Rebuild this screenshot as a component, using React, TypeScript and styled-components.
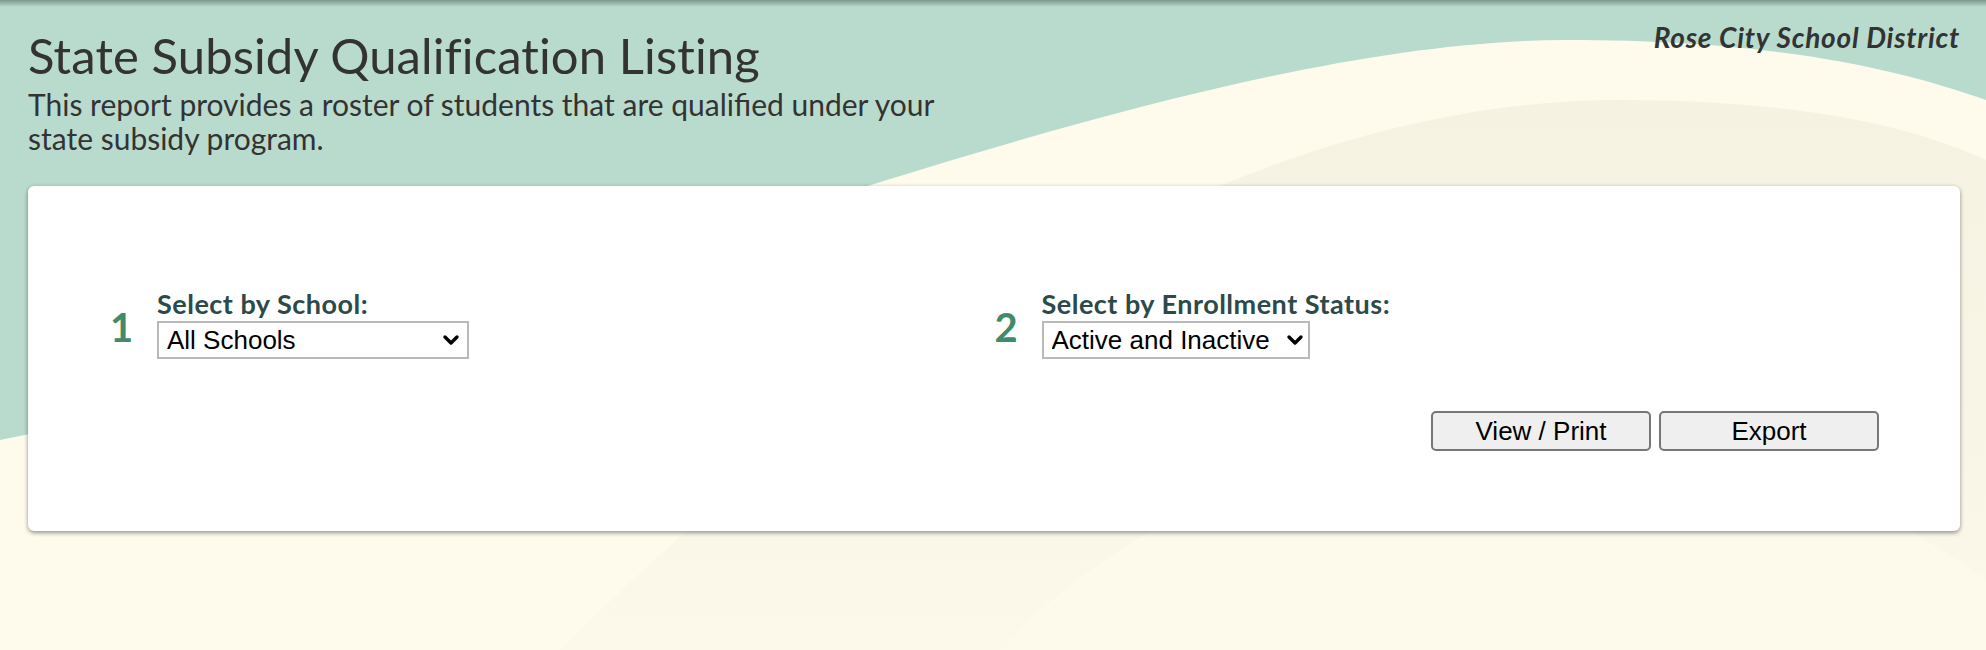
import React from "react";
import styled, { createGlobalStyle } from "styled-components";
import { ChevronDown } from "lucide-react";

const GlobalStyle = createGlobalStyle`
  html, body { margin: 0; padding: 0; }
  body {
    font-family: Lato, "Liberation Sans", sans-serif;
    background: #fffbec;
  }
  * { box-sizing: border-box; }
`;

const Page = styled.div`
  position: relative;
  min-height: 650px;
  overflow: hidden;
  background: #b9dbce;
  padding: 0 26px 0 28px;

  &::after {
    content: "";
    position: absolute;
    top: 0;
    left: 0;
    right: 0;
    height: 7px;
    background: linear-gradient(rgba(50, 70, 62, 0.45), rgba(50, 70, 62, 0));
    pointer-events: none;
    z-index: 2;
  }
`;

const Backdrop = styled.svg`
  position: absolute;
  inset: 0;
  width: 100%;
  height: 100%;
  z-index: 0;
`;

const Content = styled.div`
  position: relative;
  z-index: 1;
`;

const Header = styled.header`
  display: flex;
  justify-content: space-between;
  align-items: flex-start;
`;

const TitleBlock = styled.div`
  padding-top: 26px;
`;

const Title = styled.h1`
  margin: 0;
  font-family: Lato, "Liberation Sans", sans-serif;
  font-weight: 400;
  font-size: 49px;
  letter-spacing: 0.1px;
  line-height: 58px;
  color: #333333;
`;

const Description = styled.p`
  margin: 3px 0 0;
  max-width: 950px;
  font-size: 30px;
  line-height: 34px;
  color: #333333;
`;

const District = styled.div`
  padding-top: 21px;
  font-style: italic;
  font-weight: 700;
  font-size: 28px;
  letter-spacing: 0.75px;
  line-height: 32px;
  color: #333333;
`;

const Card = styled.section`
  margin-top: 31px;
  background: #ffffff;
  border-radius: 6px;
  box-shadow: 0 2px 4px rgba(0, 0, 0, 0.38), 0 0 4px rgba(0, 0, 0, 0.08);
  padding: 102px 81px 80px 82px;
`;

const Filters = styled.div`
  display: grid;
  grid-template-columns: 1fr 1fr;
  column-gap: 0;
`;

const FilterGroup = styled.div`
  display: flex;
  align-items: center;
`;

const StepNumber = styled.div`
  width: 47px;
  font-weight: 700;
  font-size: 40px;
  line-height: 1;
  color: #428a69;
  padding-top: 6px;
`;

const Field = styled.div`
  display: flex;
  flex-direction: column;
`;

const Label = styled.label`
  font-weight: 700;
  font-size: 27px;
  letter-spacing: 0.5px;
  line-height: 32px;
  color: #2b4a49;
  margin-bottom: 1px;
`;

const SelectWrap = styled.div<{ $width: number }>`
  position: relative;
  width: ${(p) => p.$width}px;
`;

const Select = styled.select`
  appearance: none;
  -webkit-appearance: none;
  width: 100%;
  height: 38px;
  border: 2px solid #b9b9b9;
  border-radius: 0;
  background: #ffffff;
  font-family: "Liberation Sans", Arial, sans-serif;
  font-size: 26px;
  color: #000000;
  padding: 0 30px 0 8px;
  outline: none;
`;

const Chevron = styled.span<{ $right: number }>`
  position: absolute;
  right: ${(p) => p.$right}px;
  top: 50%;
  transform: translateY(-50%);
  display: flex;
  pointer-events: none;
  color: #000;
`;

const Actions = styled.div`
  display: flex;
  justify-content: flex-end;
  gap: 8px;
  margin-top: 52px;
`;

const Button = styled.button`
  width: 220px;
  height: 40px;
  border: 2px solid #767676;
  border-radius: 5px;
  background: #efefef;
  font-family: "Liberation Sans", Arial, sans-serif;
  font-size: 26px;
  color: #000000;
  padding: 0;
  cursor: pointer;
`;

export default function App() {
  return (
    <>
      <GlobalStyle />
      <Page>
        <Backdrop viewBox="0 0 1986 650" preserveAspectRatio="none" aria-hidden="true">
          <defs>
            <linearGradient id="innerWave" x1="0" y1="0" x2="0" y2="1">
              <stop offset="0" stopColor="#f6f2e2" />
              <stop offset="0.55" stopColor="#f9f5e6" />
              <stop offset="1" stopColor="#fcf8ea" />
            </linearGradient>
          </defs>
          <path
            d="M0,440 C500,340 1150,40 1566,40 C1780,40 1900,70 1986,100 L1986,650 L0,650 Z"
            fill="#fffbec"
          />
          <path
            d="M560,650 C880,330 1260,100 1620,100 C1810,100 1920,130 1986,160 L1986,650 Z"
            fill="url(#innerWave)"
          />
          <path
            d="M1000,650 C1120,520 1320,430 1540,430 C1760,430 1900,520 1986,580 L1986,650 Z"
            fill="#fdf9eb"
          />
        </Backdrop>
        <Content>
          <Header>
            <TitleBlock>
              <Title>State Subsidy Qualification Listing</Title>
              <Description>
                This report provides a roster of students that are qualified under your state
                subsidy program.
              </Description>
            </TitleBlock>
            <District>Rose City School District</District>
          </Header>
          <Card>
            <Filters>
              <FilterGroup>
                <StepNumber>1</StepNumber>
                <Field>
                  <Label htmlFor="school">Select by School:</Label>
                  <SelectWrap $width={312}>
                    <Select id="school" defaultValue="all">
                      <option value="all">All Schools</option>
                    </Select>
                    <Chevron $right={6}>
                      <ChevronDown size={24} strokeWidth={3.4} />
                    </Chevron>
                  </SelectWrap>
                </Field>
              </FilterGroup>
              <FilterGroup>
                <StepNumber>2</StepNumber>
                <Field>
                  <Label htmlFor="status">Select by Enrollment Status:</Label>
                  <SelectWrap $width={268}>
                    <Select id="status" defaultValue="both">
                      <option value="both">Active and Inactive</option>
                    </Select>
                    <Chevron $right={3}>
                      <ChevronDown size={24} strokeWidth={3.4} />
                    </Chevron>
                  </SelectWrap>
                </Field>
              </FilterGroup>
            </Filters>
            <Actions>
              <Button type="button">View / Print</Button>
              <Button type="button">Export</Button>
            </Actions>
          </Card>
        </Content>
      </Page>
    </>
  );
}
